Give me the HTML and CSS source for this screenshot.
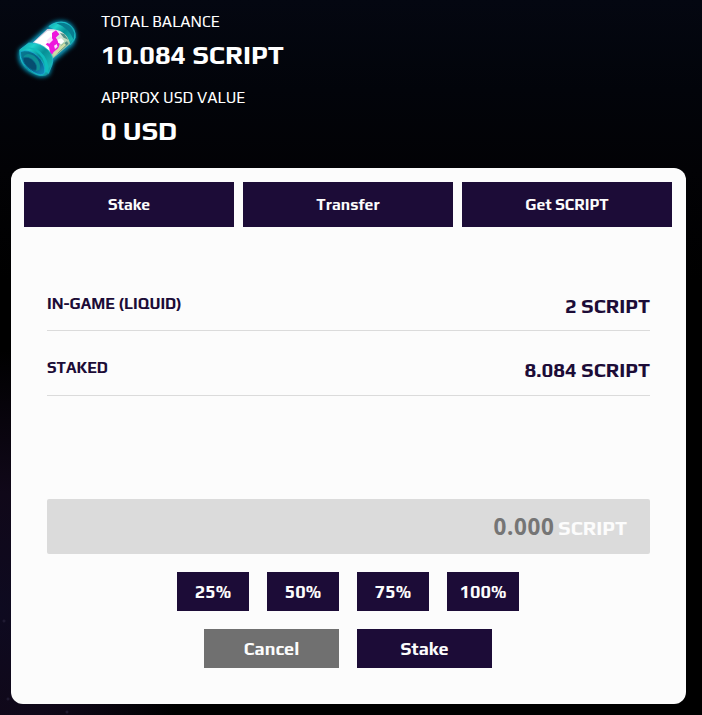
FILE: index.html
```html
<!DOCTYPE html>
<html lang="en">
<head>
<meta charset="utf-8">
<title>Balance</title>
<link rel="stylesheet" href="styles.css">
</head>
<body>
<header class="balance">
  <svg class="capsule" viewBox="0 0 300 300" aria-hidden="true">
    <defs>
      <linearGradient id="teal" x1="0" y1="0" x2="1" y2="1"><stop offset="0" stop-color="#0a9ca4"/><stop offset=".25" stop-color="#1fd0cb"/><stop offset=".5" stop-color="#078f96"/><stop offset=".8" stop-color="#18b5b2"/><stop offset="1" stop-color="#066a80"/></linearGradient>
      <linearGradient id="glass" x1="0" y1="0" x2="1" y2="1"><stop offset="0" stop-color="#9f9bbf"/><stop offset=".35" stop-color="#f4eef6"/><stop offset=".65" stop-color="#b9d9b9"/><stop offset="1" stop-color="#2a7f7a"/></linearGradient>
      <linearGradient id="lens" x1="0" y1="0" x2="1" y2="1"><stop offset="0" stop-color="#087d91"/><stop offset=".6" stop-color="#075d87"/><stop offset="1" stop-color="#1594c4"/></linearGradient>
      <filter id="glow" x="-30%" y="-30%" width="160%" height="160%"><feGaussianBlur stdDeviation="6"/></filter>
      <filter id="soft"><feGaussianBlur stdDeviation="2"/></filter>
    </defs>
    <path class="halo" filter="url(#glow)" d="M60 149L88 129L148 77Q174 58 204 69Q226 82 226 112L219 133L158 184L147 221Q132 235 106 224Q58 205 57 166Z"/>
    <path fill="url(#teal)" d="M145 80Q166 61 194 66Q229 79 226 114Q221 133 206 137Q204 102 145 80Z"/>
    <path fill="#077c90" d="M179 67Q211 68 223 99L221 119Q207 84 169 70Z"/>
    <path fill="url(#glass)" d="M98 128L142 87Q197 84 211 131L157 177Q148 143 98 128Z"/>
    <g filter="url(#soft)">
      <path fill="#fff" d="M103 126L142 93L158 92L157 109L165 120L149 151L127 141Z"/>
      <path fill="#ee12dc" d="M156 99L168 91L178 103L167 113L180 129L173 149L152 165L147 141L137 133L156 120Z"/>
      <path fill="#fae0fa" d="M139 122L153 109L159 120L147 132ZM162 137L170 132L173 140L165 147Z"/>
      <path fill="#fff" d="M172 119L184 115L193 124L184 133L175 129Z"/>
      <path fill="#568f86" d="M180 99L193 102L205 119L191 113ZM184 135L201 124L205 131L172 162Z"/>
      <path fill="#cfdda5" d="M160 157L193 129L198 135L160 171Z"/>
    </g>
    <path fill="url(#teal)" d="M58 150L86 129Q121 126 145 151Q164 171 156 195L145 221Q132 234 108 224Q57 205 58 150Z"/>
    <path fill="#0fbcbd" d="M59 150Q91 135 118 163Q139 183 134 216L146 219Q148 178 121 155Q92 133 59 150Z"/>
    <path fill="url(#lens)" stroke="#18aedb" stroke-width="2" d="M61 155Q87 146 112 167Q137 190 134 219Q124 230 101 217Q60 194 61 155Z"/>
    <path fill="#0d8f94" d="M70 172Q79 155 102 167Q125 185 119 209L108 214Q108 185 70 172Z"/>
    <path fill="#064d70" stroke="#086f93" stroke-width="2" d="M69 174Q86 167 101 183Q114 197 108 211Q98 213 86 203Q70 192 69 174Z"/>
    <path fill="none" stroke="#20bcd1" stroke-width="2" d="M59 150L86 129Q121 126 145 151Q164 171 156 195L145 221M147 79Q171 61 199 69Q230 84 225 114L210 135"/>
  </svg>
  <div class="totals">
    <p class="label">TOTAL BALANCE</p>
    <p class="value">10.084 SCRIPT</p>
    <p class="label approx">APPROX USD VALUE</p>
    <p class="value usd">0 USD</p>
  </div>
</header>
<main class="card">
  <nav class="tabs">
    <button>Stake</button>
    <button>Transfer</button>
    <button>Get SCRIPT</button>
  </nav>
  <section class="holdings">
    <div class="row"><span class="name">IN-GAME (LIQUID)</span><span class="amount">2 SCRIPT</span></div>
    <div class="row staked"><span class="name">STAKED</span><span class="amount">8.084 SCRIPT</span></div>
  </section>
  <div class="field"><span class="number">0.000</span><span class="unit">SCRIPT</span></div>
  <div class="actions percents">
    <button>25%</button><button>50%</button><button>75%</button><button>100%</button>
  </div>
  <div class="actions confirm">
    <button class="cancel">Cancel</button><button class="submit">Stake</button>
  </div>
</main>
</body>
</html>
```
FILE: styles.css
```css
* { box-sizing: border-box; }
body {
  margin: 0;
  height: 715px;
  overflow: hidden;
  font-family: Play, Inter, "Liberation Sans", sans-serif;
  background:
    radial-gradient(circle at 4px 621px, #29233c 0, transparent 2px),
    radial-gradient(circle at 8px 699px, #29233c 0, transparent 2px),
    radial-gradient(circle at 67px 712px, #29233c 0, transparent 2px),
    radial-gradient(ellipse 190px 260px at 0 610px, #0e0a20 0, #100819 45%, transparent 100%),
    linear-gradient(#040711 0, #02040a 90px, #020205 170px, #000 280px);
}
p { margin: 0; }
button {
  border: 0;
  padding: 0;
  font-family: inherit;
  font-weight: 700;
  color: #fcfcfc;
  background: #1c0c37;
}
.balance { display: flex; height: 168px; }
.capsule { width: 100px; height: 100px; flex: none; }
.halo { fill: #0899bd; stroke: #0899bd; stroke-width: 5; }
.totals { padding: 9px 0 0 1px; color: #fff; white-space: nowrap; }
.label { font-size: 15.75px; line-height: 24px; }
.value { font-size: 27px; line-height: 43px; font-weight: 700; }
.approx { line-height: 43px; }
.usd { line-height: 23px; }
.card {
  width: 675px;
  height: 536px;
  margin-left: 11px;
  padding: 14px 14px 0 13px;
  border-radius: 12px;
  background: #fcfcfc;
}
.tabs { display: grid; grid-template-columns: repeat(3, 210px); gap: 9px; }
.tabs button { height: 45px; padding-bottom: 1px; font-size: 15.75px; }
.holdings { margin: 55px 22px 0 23px; color: #1c0c37; }
.row {
  display: flex;
  justify-content: space-between;
  height: 49px;
  border-bottom: 1px solid #dbdbdb;
  white-space: nowrap;
}
.staked { margin-top: 15px; height: 50px; }
.name { font-size: 15.75px; font-weight: 600; line-height: 43px; }
.amount { font-size: 20.25px; font-weight: 600; line-height: 47px; }
.field {
  display: flex;
  align-items: baseline;
  justify-content: flex-end;
  gap: 4px;
  height: 55px;
  margin: 103px 22px 0 23px;
  padding-right: 23px;
  border-radius: 2px;
  line-height: 56px;
  font-weight: 700;
  background: #dbdbdb;
}
.number { font-family: "Noto Sans", "Open Sans", sans-serif; font-size: 22.5px; letter-spacing: 0.6px; color: #757575; }
.unit { font-size: 20.25px; color: #fcfcfc; }
.actions { display: flex; justify-content: center; gap: 18px; margin: 18px 1px 0 0; }
.actions button { width: 72px; height: 39px; padding-left: 1px; font-size: 18px; }
.confirm button { width: 135px; }
.confirm .cancel { background: #707070; }
```
